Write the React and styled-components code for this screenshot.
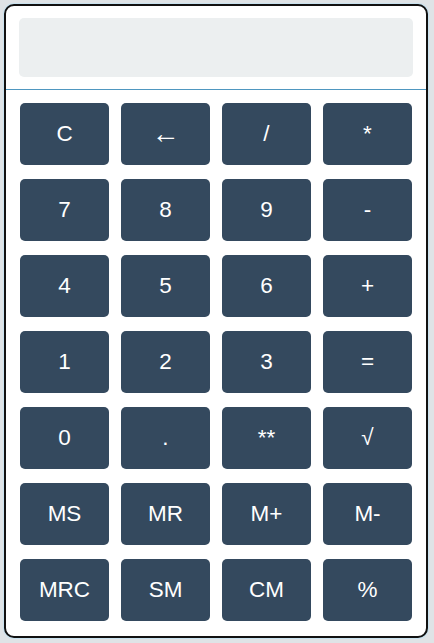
import styled, { createGlobalStyle } from "styled-components";

const GlobalStyle = createGlobalStyle`
  body {
    margin: 0;
    background: #dfe3e6;
    font-family: "Liberation Sans", Arial, sans-serif;
  }
`;

const Calculator = styled.div`
  margin: 4px;
  width: 424px;
  height: 634px;
  box-sizing: border-box;
  background: #fff;
  border: 2px solid #111;
  border-radius: 10px;
  box-shadow: 0 0 0 1px #c9e2ef;
  display: flex;
  flex-direction: column;
  overflow: hidden;
`;

const DisplayArea = styled.div`
  padding: 12px 13px 12px;
`;

const Screen = styled.div`
  height: 59px;
  background: #eceff0;
  border-radius: 5px;
`;

const Keypad = styled.div`
  flex: 1;
  border-top: 1px solid #4f97c0;
  padding: 13px 14px 0;
  display: grid;
  grid-template-columns: repeat(4, 1fr);
  grid-auto-rows: 62px;
  column-gap: 12px;
  row-gap: 14px;
`;

const Key = styled.button`
  border: none;
  border-radius: 5px;
  background: #34495e;
  color: #fff;
  font-family: "Liberation Sans", Arial, sans-serif;
  font-size: ${(p) => (p.$big ? "28px" : "22.5px")};
  padding: 0;
  cursor: pointer;
`;

const keys = [
  "C", "←", "/", "*",
  "7", "8", "9", "-",
  "4", "5", "6", "+",
  "1", "2", "3", "=",
  "0", ".", "**", "√",
  "MS", "MR", "M+", "M-",
  "MRC", "SM", "CM", "%",
];

const App = () => (
  <>
    <GlobalStyle />
    <Calculator>
      <DisplayArea>
        <Screen />
      </DisplayArea>
      <Keypad>
        {keys.map((k) => (
          <Key key={k} $big={k === "←"}>
            {k}
          </Key>
        ))}
      </Keypad>
    </Calculator>
  </>
);

export default App;
